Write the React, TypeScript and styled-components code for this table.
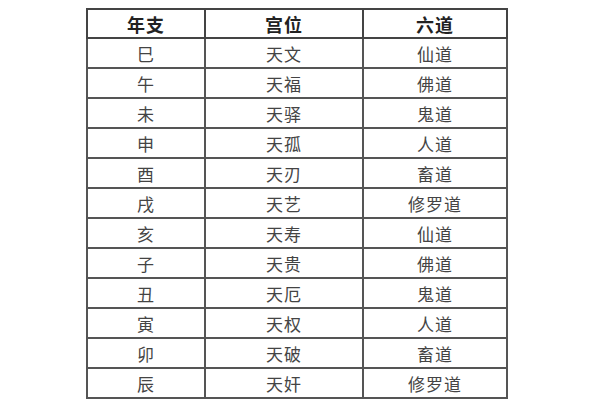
import styled, { createGlobalStyle } from "styled-components";

const rows: [string, string, string][] = [
  ["巳", "天文", "仙道"],
  ["午", "天福", "佛道"],
  ["未", "天驿", "鬼道"],
  ["申", "天孤", "人道"],
  ["酉", "天刃", "畜道"],
  ["戌", "天艺", "修罗道"],
  ["亥", "天寿", "仙道"],
  ["子", "天贵", "佛道"],
  ["丑", "天厄", "鬼道"],
  ["寅", "天权", "人道"],
  ["卯", "天破", "畜道"],
  ["辰", "天奸", "修罗道"],
];

const GlobalStyle = createGlobalStyle`
  html, body {
    margin: 0;
    padding: 0;
    background: #ffffff;
  }
  body {
    font-family: "Noto Sans CJK SC", "Noto Sans", sans-serif;
  }
`;

const Page = styled.div`
  width: 600px;
  height: 400px;
  padding: 8px 0 0 86px;
  box-sizing: border-box;
  overflow: hidden;
`;

const Table = styled.table`
  border-collapse: collapse;
  table-layout: fixed;
  width: 422px;
  border: 2px solid #333;
`;

const Cell = styled.td<{ $head?: boolean }>`
  height: ${({ $head }) => ($head ? "27px" : "28px")};
  padding: 0;
  border: 2px solid ${({ $head }) => ($head ? "#444" : "#555")};
  text-align: center;
  vertical-align: middle;
  font-size: ${({ $head }) => ($head ? "18px" : "17px")};
  font-weight: ${({ $head }) => ($head ? 700 : 400)};
  color: ${({ $head }) => ($head ? "#222" : "#444")};
  line-height: 1;
  letter-spacing: 1px;
`;

const App = () => {
  return (
    <Page>
      <GlobalStyle />
      <Table>
        <colgroup>
          <col style={{ width: 118 }} />
          <col style={{ width: 158 }} />
          <col style={{ width: 144 }} />
        </colgroup>
        <thead>
          <tr>
            <Cell as="th" $head>
              年支
            </Cell>
            <Cell as="th" $head>
              宫位
            </Cell>
            <Cell as="th" $head>
              六道
            </Cell>
          </tr>
        </thead>
        <tbody>
          {rows.map(([branch, palace, path]) => (
            <tr key={branch}>
              <Cell>{branch}</Cell>
              <Cell>{palace}</Cell>
              <Cell>{path}</Cell>
            </tr>
          ))}
        </tbody>
      </Table>
    </Page>
  );
};

export default App;
